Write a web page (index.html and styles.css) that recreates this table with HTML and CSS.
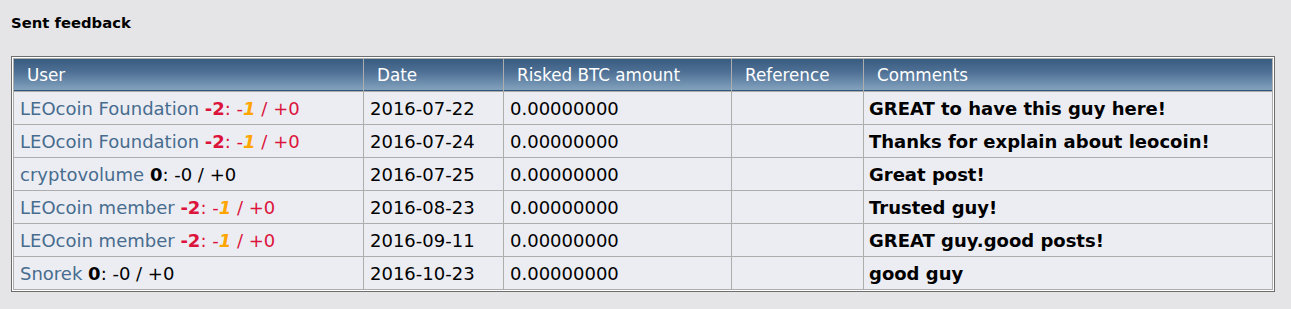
FILE: index.html
```html
<!DOCTYPE html>
<html>
<head>
<meta charset="utf-8">
<link rel="stylesheet" href="styles.css">
</head>
<body>
<div class="page">
  <h3 class="title">Sent feedback</h3>
  <div class="tborder">
    <table class="feedback">
      <colgroup>
        <col class="c-user"><col class="c-date"><col class="c-risk"><col class="c-ref"><col class="c-com">
      </colgroup>
      <thead>
        <tr>
          <th>User</th><th>Date</th><th>Risked BTC amount</th><th>Reference</th><th>Comments</th>
        </tr>
      </thead>
      <tbody>
        <tr>
          <td><a class="user">LEOcoin Foundation</a> <span class="neg"><b>-2</b>: -<b class="warn">1</b> / +0</span></td>
          <td>2016-07-22</td><td>0.00000000</td><td></td><td class="com">GREAT to have this guy here!</td>
        </tr>
        <tr>
          <td><a class="user">LEOcoin Foundation</a> <span class="neg"><b>-2</b>: -<b class="warn">1</b> / +0</span></td>
          <td>2016-07-24</td><td>0.00000000</td><td></td><td class="com">Thanks for explain about leocoin!</td>
        </tr>
        <tr>
          <td><a class="user">cryptovolume</a> <span class="zero"><b>0</b>: -0 / +0</span></td>
          <td>2016-07-25</td><td>0.00000000</td><td></td><td class="com">Great post!</td>
        </tr>
        <tr>
          <td><a class="user">LEOcoin member</a> <span class="neg"><b>-2</b>: -<b class="warn">1</b> / +0</span></td>
          <td>2016-08-23</td><td>0.00000000</td><td></td><td class="com">Trusted guy!</td>
        </tr>
        <tr>
          <td><a class="user">LEOcoin member</a> <span class="neg"><b>-2</b>: -<b class="warn">1</b> / +0</span></td>
          <td>2016-09-11</td><td>0.00000000</td><td></td><td class="com">GREAT guy.good posts!</td>
        </tr>
        <tr>
          <td><a class="user">Snorek</a> <span class="zero"><b>0</b>: -0 / +0</span></td>
          <td>2016-10-23</td><td>0.00000000</td><td></td><td class="com">good guy</td>
        </tr>
      </tbody>
    </table>
  </div>
</div>
</body>
</html>
```

FILE: styles.css
```css
html, body {
  margin: 0;
  padding: 0;
  background: #e5e5e8;
}
body {
  font-family: "DejaVu Sans", Verdana, sans-serif;
  color: #000;
}
.page {
  padding: 14px 16px 0 11px;
}
.title {
  margin: 0 0 24px 0;
  font-size: 14.8px;
  line-height: 18px;
  font-weight: bold;
}
.tborder {
  border: 1px solid #6d6d6d;
  padding: 1px;
  background: #ffffff;
}
.feedback {
  width: 100%;
  border-collapse: separate;
  border-spacing: 1px;
  background: #adadad;
  table-layout: fixed;
}
.c-user { width: 349px; }
.c-date { width: 139px; }
.c-risk { width: 227px; }
.c-ref { width: 131px; }
.c-com { width: auto; }
.feedback th {
  height: 32px;
  padding: 0 0 1px 13px;
  box-sizing: border-box;
  text-align: left;
  font-weight: normal;
  font-size: 16.8px;
  color: #ffffff;
  background: linear-gradient(to bottom, #385b80 0%, #4e7094 40%, #83a2bf 97%, #34557a 97%, #34557a 100%);
  white-space: nowrap;
}
.feedback td {
  height: 32px;
  padding: 0 6px;
  box-sizing: border-box;
  background: #ecedf3;
  font-size: 18px;
  white-space: nowrap;
}
.feedback td.com {
  padding-left: 5px;
}
.user {
  color: #476c8e;
  text-decoration: none;
}
.neg {
  color: #dc143c;
}
.warn {
  color: #ffa500;
  font-style: italic;
}
.zero {
  color: #000;
}
.com {
  font-weight: bold;
}
```
